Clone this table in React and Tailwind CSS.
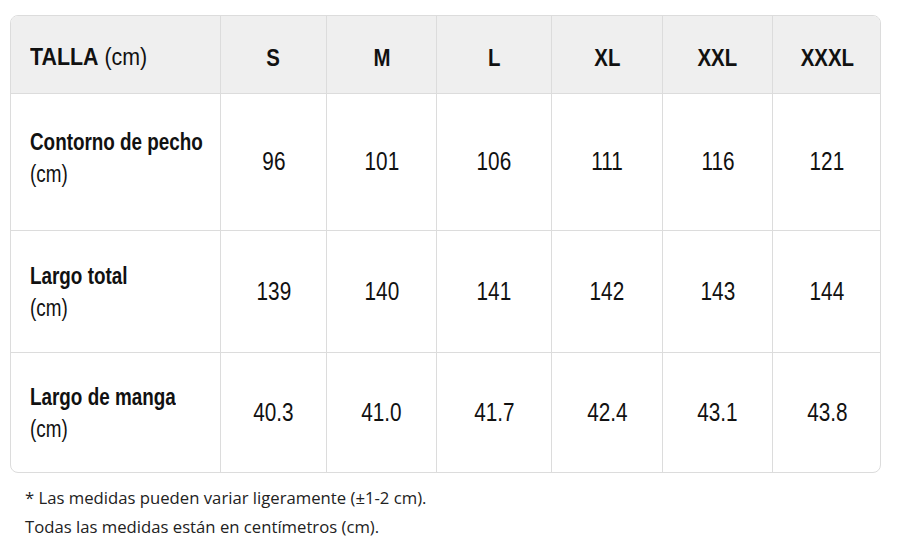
const sizes = ["S", "M", "L", "XL", "XXL", "XXXL"];

const rows = [
  { label: "Contorno de pecho", values: ["96", "101", "106", "111", "116", "121"], h: "h-[137px]", pad: "pb-[8px]" },
  { label: "Largo total", values: ["139", "140", "141", "142", "143", "144"], h: "h-[122px]", pad: "" },
  { label: "Largo de manga", values: ["40.3", "41.0", "41.7", "42.4", "43.1", "43.8"], h: "h-[119px]", pad: "" },
];

const grid = "grid grid-cols-[209px_106px_110px_115px_111px_110px_109px]";

export default function App() {
  return (
    <div className="w-[900px] h-[550px] bg-white overflow-hidden">
      <div
        className="ml-[10px] mt-[15px] w-[871px] rounded-[8px] border border-[#dcdcdc] overflow-hidden text-[#111]"
        style={{ fontFamily: '"Liberation Sans", Arial, sans-serif' }}
      >
        {/* header */}
        <div className={`${grid} h-[78px] bg-[#efefef] border-b border-[#dcdcdc]`}>
          <div className="flex items-center pl-[19px] pt-[6px] text-[23px]">
            <span className="inline-block origin-left scale-x-[0.93] whitespace-nowrap">
              <span className="font-bold">TALLA</span> (cm)
            </span>
          </div>
          {sizes.map((s) => (
            <div key={s} className="flex items-center justify-center pt-[6px] border-l border-[#dcdcdc] text-[24px] font-bold">
              <span className="inline-block scale-x-[0.85]">{s}</span>
            </div>
          ))}
        </div>

        {/* body */}
        {rows.map((r, i) => (
          <div
            key={r.label}
            className={`${grid} ${r.h} ${i < rows.length - 1 ? "border-b border-[#dcdcdc]" : ""}`}
          >
            <div className={`flex flex-col items-start justify-center pl-[19px] text-[23px] leading-[32px] ${r.pad}`}>
              <span className="inline-block origin-left scale-x-[0.82] whitespace-nowrap font-bold">{r.label}</span>
              <span className="inline-block origin-left scale-x-[0.82]">(cm)</span>
            </div>
            {r.values.map((v, j) => (
              <div key={j} className="flex items-center justify-center border-l border-[#dcdcdc] text-[25px]">
                <span className="inline-block scale-x-[0.83]">{v}</span>
              </div>
            ))}
          </div>
        ))}
      </div>

      <div
        className="mt-[10px] pl-[25px] text-[16.7px] leading-[29px] text-[#222]"
        style={{ fontFamily: '"Open Sans", sans-serif' }}
      >
        <p>* Las medidas pueden variar ligeramente (±1-2 cm).</p>
        <p>Todas las medidas están en centímetros (cm).</p>
      </div>
    </div>
  );
}
